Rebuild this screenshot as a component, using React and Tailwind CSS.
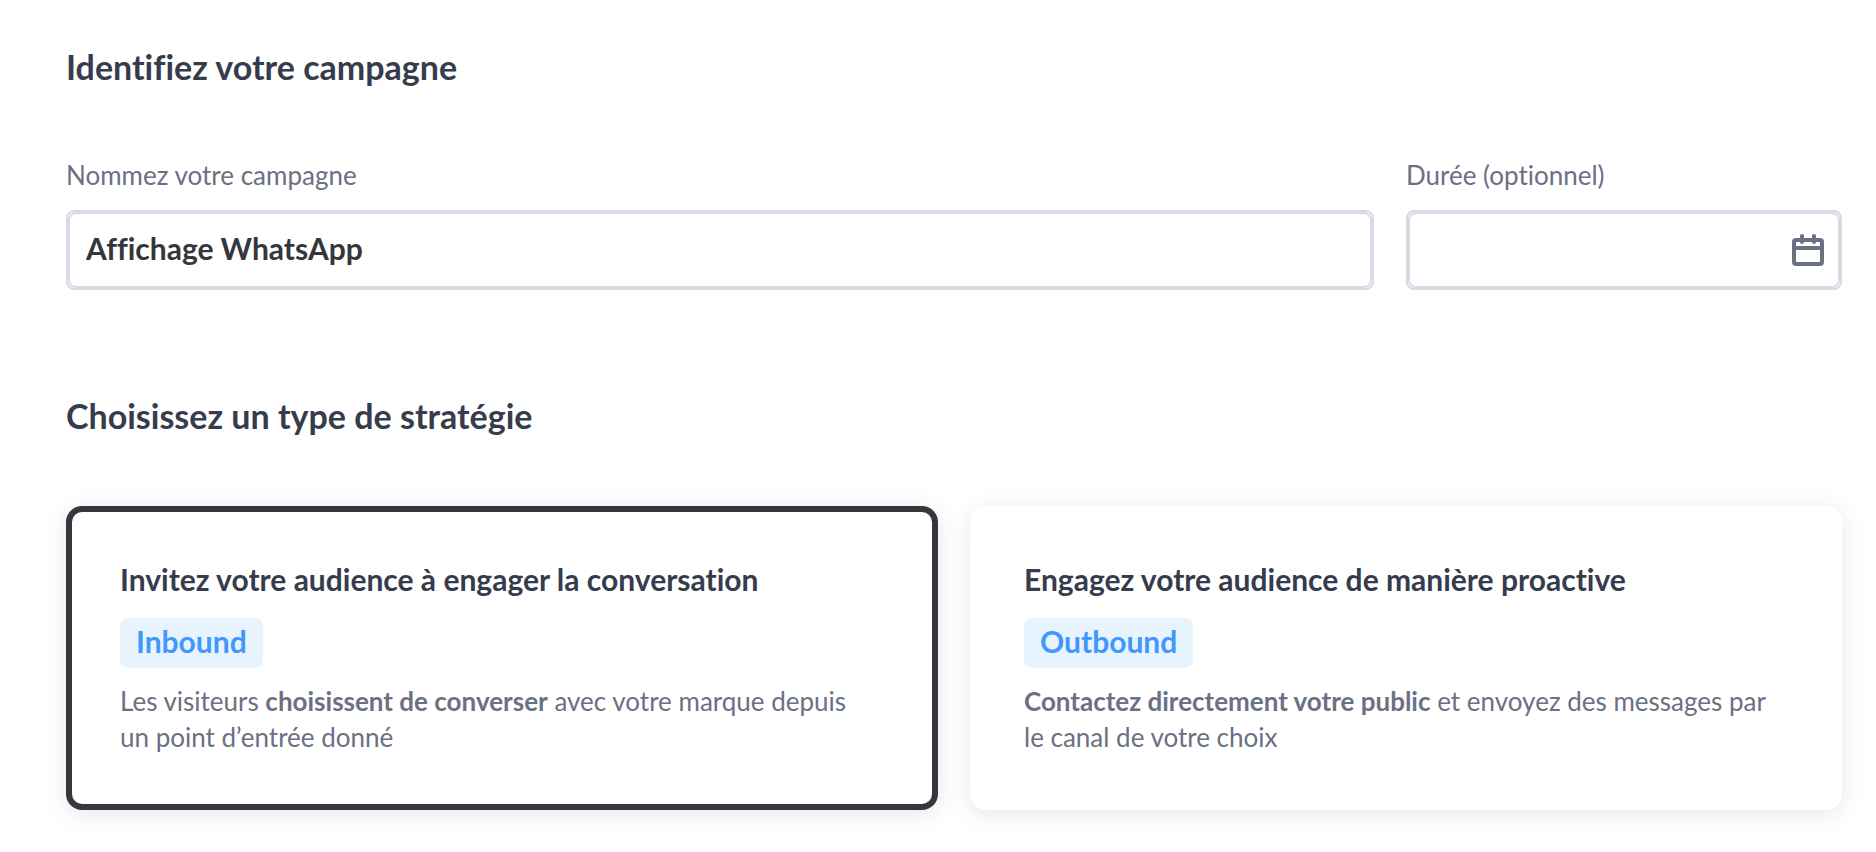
import React, { useState } from 'react';

const CalendarIcon = () => (
  <svg className="w-8 h-8" fill="none" stroke="currentColor" strokeWidth={4} viewBox="0 0 32 32" aria-hidden="true">
    <rect x="2" y="6" width="28" height="24" rx="2" />
    <path d="M2 14h28" />
    <path strokeLinecap="round" d="M10 2v6M22 2v6" />
  </svg>
);

const strategies = [
  {
    id: 'inbound',
    title: 'Invitez votre audience à engager la conversation',
    badge: 'Inbound',
    description: (
      <>
        Les visiteurs <strong className="font-bold">choisissent de converser</strong> avec votre marque depuis un point d’entrée donné
      </>
    ),
  },
  {
    id: 'outbound',
    title: 'Engagez votre audience de manière proactive',
    badge: 'Outbound',
    description: (
      <>
        <strong className="font-bold">Contactez directement votre public</strong> et envoyez des messages par le canal de votre choix
      </>
    ),
  },
];

const SectionTitle = ({ children }) => (
  <h2 className="text-[34px] leading-[42px] font-bold text-[#373c4c]">{children}</h2>
);

const Field = ({ id, label, icon, ...inputProps }) => (
  <div>
    <label htmlFor={id} className="block text-[26px] leading-9 text-[#6b7083]">
      {label}
    </label>
    <div className="relative mt-[17px] rounded-lg border-2 border-[#d8dae5]">
      <input
        id={id}
        type="text"
        className="block w-full h-19 px-4 pb-1 rounded-lg border-2 border-[#d8dae5] bg-white text-[30px] font-bold text-[#34373c] outline-none"
        {...inputProps}
      />
      {icon && (
        <span className="absolute inset-y-0 right-4 flex items-center text-[#6b7083] pointer-events-none">
          {icon}
        </span>
      )}
    </div>
  </div>
);

const StrategyCard = ({ strategy, selected, onSelect }) => (
  <button
    type="button"
    aria-pressed={selected}
    onClick={onSelect}
    className={`flex flex-col items-start pl-12 pr-14 py-[49px] rounded-2xl border-6 bg-white text-left shadow-[0_4px_24px_rgba(60,60,110,0.12)] ${
      selected ? 'border-[#34373c]' : 'border-white'
    }`}
  >
    <span className="text-[30px] leading-9 font-bold text-[#373c4c]">{strategy.title}</span>
    <span className="mt-[21px] px-4 pt-[5px] pb-[9px] rounded-lg bg-[#e7f4fe] text-[30px] leading-9 font-bold text-[#4197fb]">
      {strategy.badge}
    </span>
    <span className="mt-[15px] text-[26px] leading-9 text-[#6b7083]">{strategy.description}</span>
  </button>
);

const App = () => {
  const [name, setName] = useState('Affichage WhatsApp');
  const [duration, setDuration] = useState('');
  const [selected, setSelected] = useState('inbound');

  return (
    <main className="min-h-screen bg-white pl-[66px] pr-[34px] pt-[46px] pb-10 font-['Lato',sans-serif] [font-variant-ligatures:no-common-ligatures]">
      {/* Campaign identity */}
      <section>
        <SectionTitle>Identifiez votre campagne</SectionTitle>
        <div className="mt-[69px] grid grid-cols-[3fr_1fr] gap-8">
          <Field
            id="campaign-name"
            label="Nommez votre campagne"
            value={name}
            onChange={(e) => setName(e.target.value)}
          />
          <Field
            id="campaign-duration"
            label="Durée (optionnel)"
            icon={<CalendarIcon />}
            value={duration}
            onChange={(e) => setDuration(e.target.value)}
          />
        </div>
      </section>

      {/* Strategy type */}
      <section className="mt-[105px]">
        <SectionTitle>Choisissez un type de stratégie</SectionTitle>
        <div className="mt-[69px] grid grid-cols-2 gap-8">
          {strategies.map((strategy) => (
            <StrategyCard
              key={strategy.id}
              strategy={strategy}
              selected={selected === strategy.id}
              onSelect={() => setSelected(strategy.id)}
            />
          ))}
        </div>
      </section>
    </main>
  );
};

export default App;
